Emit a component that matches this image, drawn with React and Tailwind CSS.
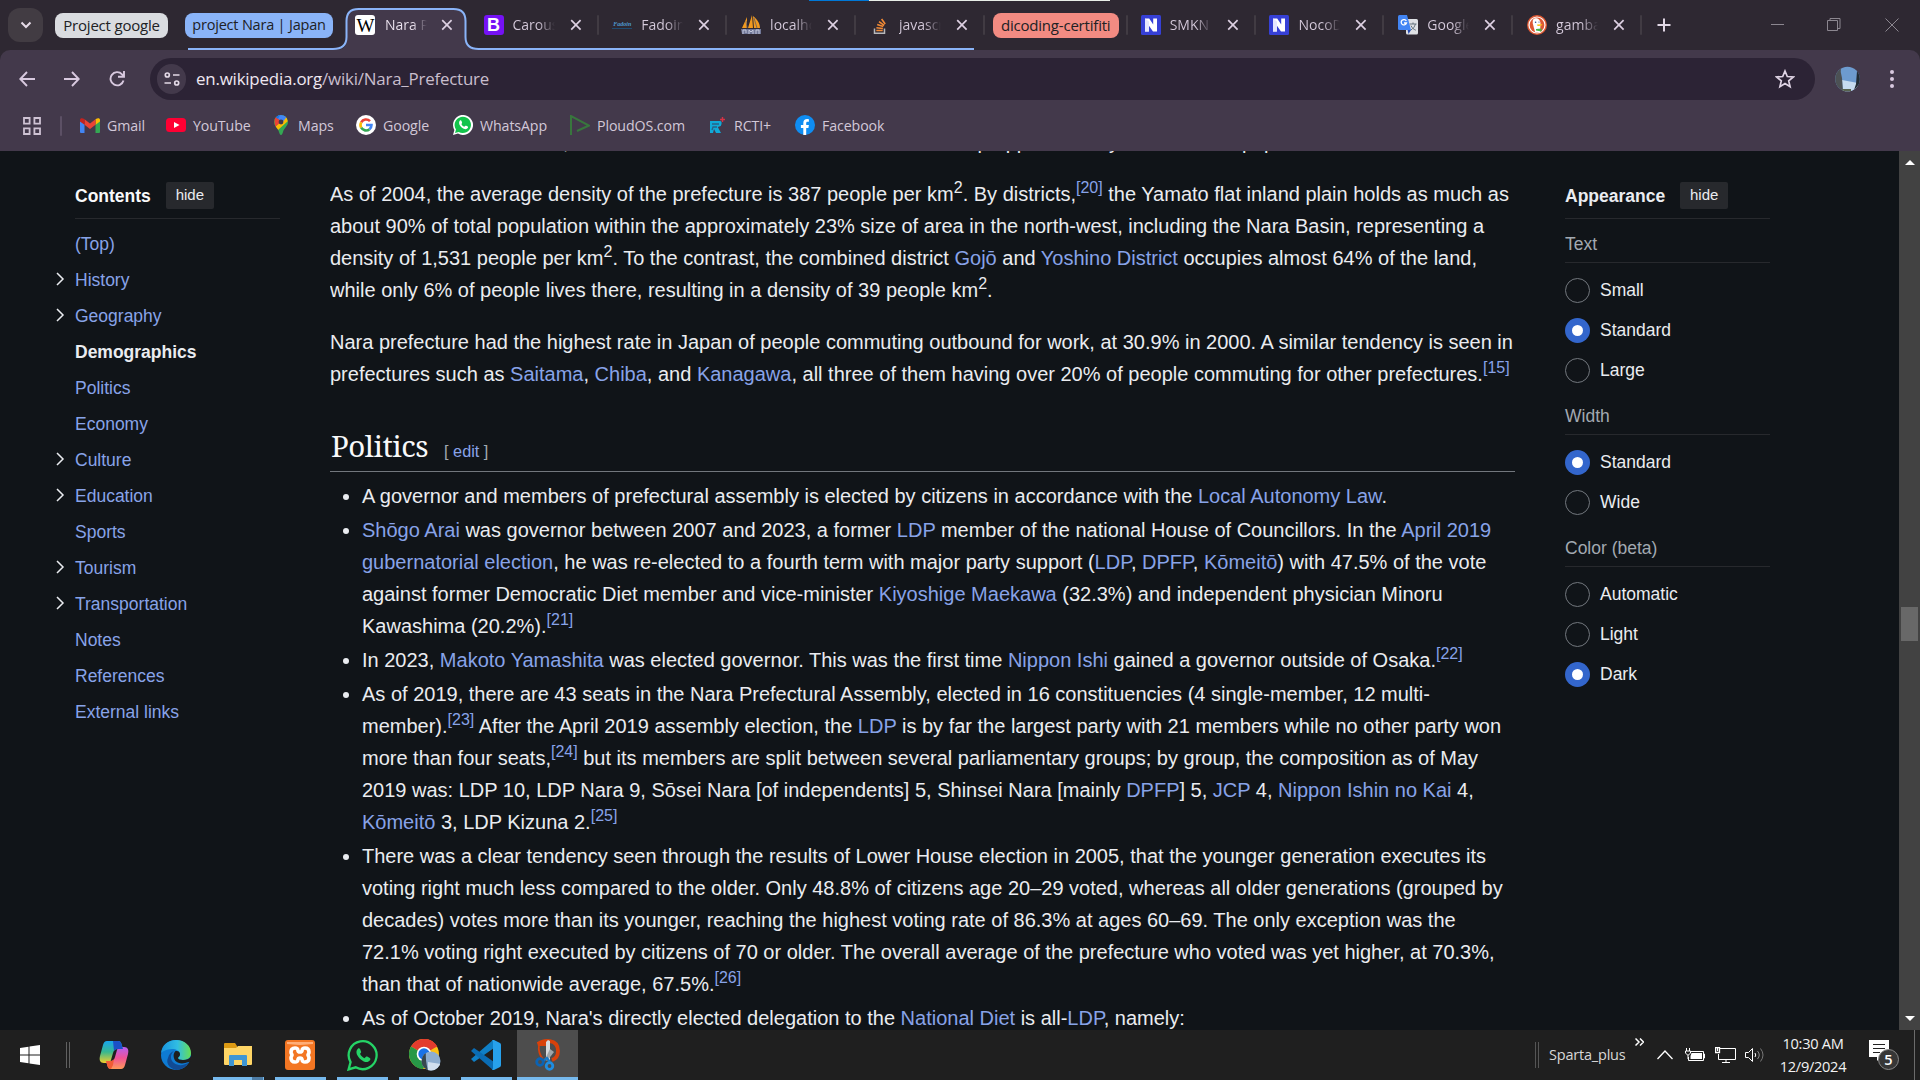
import React from "react";

const LK = ({ children }) => <span className="text-[#88a3e8]">{children}</span>;
const Ref = ({ n }) => (
  <sup className="relative top-[-8px] align-baseline text-[16px] leading-none text-[#88a3e8]">[{n}]</sup>
);
const Sq = () => <sup className="relative top-[-8px] align-baseline text-[16px] leading-none">2</sup>;
const Ln = ({ children }) => <span className="block h-8 whitespace-nowrap leading-8">{children}</span>;
const Li = ({ children }) => (
  <li className="relative mb-[2px]">
    <span className="absolute left-[-19px] top-[14px] size-[6px] rounded-full bg-[#eaecf0]" />
    {children}
  </li>
);

const Close = () => (
  <svg width="12" height="12" viewBox="0 0 12 12" className="shrink-0" stroke="#ddd0e2" strokeWidth="1.7">
    <path d="M1.2 1.2l9.4 9.4M10.6 1.2L1.2 10.6" />
  </svg>
);

const NIcon = () => (
  <svg width="20" height="20" viewBox="0 0 20 20">
    <rect width="20" height="20" rx="1.5" fill="#3640d6" />
    <path d="M4 3.5h4.2l4 6V3.5H16v13h-4l-4.2-6v6H4z" fill="#fff" />
    <path d="M4 3.5l4 3v10H4z" fill="#e5e6ff" />
  </svg>
);

const TAB_ICONS = {
  boot: (
    <span className="flex size-5 items-center justify-center rounded-[3px] bg-[#7512f5] font-['Liberation_Sans'] text-[18px] font-bold leading-none text-white">B</span>
  ),
  fado: (
    <span className="w-5 border-b border-[#1f4a70] text-center font-['Liberation_Serif'] text-[6px] font-bold italic leading-[7px] text-[#4e9ad0]">Fadoin</span>
  ),
  pma: (
    <svg width="20" height="20" viewBox="0 0 20 20">
      <path d="M6 2L1 13h5zM11 0L7 13h5zM12 1c5 4 7 8 7 12h-6z" fill="#f29a1f" />
      <path d="M5 6l1 7M13 3l3 10" stroke="#7d6a58" />
      <path d="M0 14h20v5H1z" fill="#707797" />
      <path d="M2 19v-4h3v3M8 19v-4l2 2 2-2v4M15 19v-4h3v4" stroke="#c4c9dc" fill="none" />
    </svg>
  ),
  so: (
    <svg width="20" height="20" viewBox="0 0 20 20" fill="none">
      <path d="M4.500 13.500v4.700h10v-4.700" stroke="#b8b8ba" strokeWidth="1.500" />
      <path d="M6.300 15.500h6.400M6.400 12.700l6.500.8M7.200 9.600l6.100 2M9 6.600l5.200 3.700M11.600 4l3.600 5" stroke="#f28a35" strokeWidth="1.600" />
    </svg>
  ),
  n: <NIcon />,
  tr: (
    <svg width="20" height="20" viewBox="0 0 20 20">
      <rect x="8" y="4" width="12" height="15.5" rx="1.5" fill="#dfe1e5" />
      <path d="M11.5 9h7M15 7.5V9M17.4 9c-.8 3-2.4 4.8-4.6 6M13 10.600c1 2.300 2.600 3.700 4.800 4.600" stroke="#64727c" fill="none" />
      <path d="M0 1.500Q0 0 1.500 0H9l4 15H1.500Q0 15 0 13.500z" fill="#4285f4" />
      <path d="M9.600 15H13l-2.500 4z" fill="#2448b0" />
      <path d="M8.300 6A2.700 2.700 0 1 0 8.500 8H6" stroke="#fff" strokeWidth="1.300" fill="none" />
    </svg>
  ),
  duck: (
    <svg width="20" height="20" viewBox="0 0 20 20">
      <circle cx="10" cy="10" r="10" fill="#de5833" />
      <circle cx="10" cy="10" r="8.600" fill="#fff" />
      <circle cx="10" cy="10" r="7.400" fill="#de5833" />
      <path d="M7 3.700c4-1.500 6.500 1.600 6.500 5.300l-.5 7.900c-1.600.6-3.300.6-5 0L5.800 8.500C5.500 6.500 5.600 4.500 7 3.700z" fill="#fff" />
      <path d="M10 9.500l5-.3c1 .8 0 1.500-4.500 1.800z" fill="#fcc419" />
      <path d="M9 14l5.500-.6v3L9 15.500z" fill="#43b649" />
      <circle cx="8.600" cy="7.200" r=".8" fill="#2d4f8e" />
      <circle cx="12" cy="7" r=".6" fill="#2d4f8e" />
    </svg>
  ),
};

function Tab({ icon, label, sep = true }) {
  return (
    <div className="flex h-10 w-[128.800px] shrink-0 items-center">
      <div className="flex w-[113px] items-center">
        <span className="flex w-5 shrink-0 justify-center">{TAB_ICONS[icon]}</span>
        <span className="ml-[9px] w-[42px] shrink-0 overflow-hidden whitespace-nowrap bg-gradient-to-r from-[#d6cbdc] from-60% to-[#d6cbdc00] bg-clip-text text-[14px] leading-5 text-transparent">
          {label}
        </span>
        <span className="ml-[15px] flex"><Close /></span>
      </div>
      {sep && <span className="h-5 w-[2px] rounded-full bg-[#413b43]" />}
    </div>
  );
}

function TabStrip() {
  return (
    <div className="relative flex h-[50px] w-full bg-[#2e2832]">
      <div className="absolute left-[809px] top-0 flex h-px w-[301px]">
        <span className="w-[60px] bg-[#0078d7]" />
        <span className="flex-1 bg-[#e8eee8]" />
      </div>
      <svg className="absolute left-[188px] top-0" width="787" height="50" viewBox="0 0 787 50" fill="none">
        <path d="M147 50c9 0 12-4 12-12V21q0-12 12-12h95q12 0 12 12v17c0 8 4 12 13 12z" fill="#43394b" />
        <path d="M0 49h145c9 0 13.500-4 13.500-12V21q0-12 12-12h95q12 0 12 12v16c0 8 4 12 13 12H786" stroke="#8ab4f8" strokeWidth="2" />
      </svg>
      <div className="relative flex h-[50px] flex-1 items-center">
        <span className="ml-2 flex h-[34px] w-[35px] items-center justify-center rounded-[12px] bg-[#423c43]">
          <svg width="12" height="8" viewBox="0 0 12 8" fill="none" stroke="#e6dbe8" strokeWidth="2"><path d="M1.500 1.500L6 6l4.500-4.500" /></svg>
        </span>
        <span className="ml-3 flex h-[25px] w-[113px] items-center justify-center whitespace-nowrap rounded-[8px] bg-[#dadce0] text-[15px] tracking-[-0.200px] text-[#202124]">Project google</span>
        <span className="ml-[17px] flex h-[25px] w-[148px] items-center justify-center whitespace-nowrap rounded-[8px] bg-[#8ab4f8] text-[14.500px] tracking-[-0.200px] text-[#202124]">project Nara | Japan</span>
        <div className="ml-[22px] flex w-[128.500px] items-center">
          <span className="flex h-5 w-5 items-center justify-center rounded-[3px] bg-white font-['Liberation_Serif'] text-[19px] leading-none tracking-[-1px] text-black">W</span>
          <span className="ml-[10px] w-[42px] overflow-hidden whitespace-nowrap bg-gradient-to-r from-[#efe6f2] from-65% to-[#efe6f200] bg-clip-text text-[14px] leading-5 text-transparent">Nara Pref</span>
          <span className="ml-[14px] flex"><Close /></span>
        </div>
        <Tab icon="boot" label="Carousel" />
        <Tab icon="fado" label="Fadoin" />
        <Tab icon="pma" label="localhost" />
        <Tab icon="so" label="javascript" />
        <span className="-ml-[6px] flex h-[25px] w-[126px] items-center justify-center whitespace-nowrap rounded-[8px] bg-[#f28b82] text-[15px] tracking-[-0.200px] text-[#202124]">dicoding-certifiti</span>
        <span className="ml-[7px] mr-[13px] h-5 w-[2px] rounded-full bg-[#413b43]" />
        <Tab icon="n" label="SMKN 1" />
        <Tab icon="n" label="NocoDB" />
        <Tab icon="tr" label="Google" />
        <Tab icon="duck" label="gambar" />
        <svg className="ml-px" width="14" height="14" viewBox="0 0 14 14" stroke="#e2d8e6" strokeWidth="2"><path d="M7 .5v13M.5 7h13" /></svg>
        <div className="ml-auto mr-[21px] flex items-center text-[#8c8790]">
          <svg width="13" height="14" viewBox="0 0 13 14" stroke="currentColor"><path d="M0 6.500h13" /></svg>
          <svg className="ml-[43px]" width="14" height="14" viewBox="0 0 14 14" fill="none" stroke="currentColor"><path d="M.5 2.500h10v10h-10zM3 2.500V.500h10v10h-2.500" /></svg>
          <svg className="ml-[44px]" width="14" height="14" viewBox="0 0 14 14" stroke="currentColor"><path d="M.5.5l13 13M13.500.5l-13 13" /></svg>
        </div>
      </div>
    </div>
  );
}

function AddressBar() {
  return (
    <div className="flex h-[57px] w-full items-center rounded-t-[10px] bg-[#43394b]">
      <div className="flex w-[150px] items-center gap-[29px] pl-[19px]">
        <svg width="16" height="16" viewBox="0 0 16 16" fill="none" stroke="#d8c9df" strokeWidth="1.900"><path d="M16 8H1.500M8 1L1.300 8 8 15" /></svg>
        <svg width="16" height="16" viewBox="0 0 16 16" fill="none" stroke="#d8c9df" strokeWidth="1.900"><path d="M0 8h14.500M8 1l6.700 7L8 15" /></svg>
        <svg width="16" height="16" viewBox="0 0 16 16" fill="none" stroke="#d8c9df" strokeWidth="1.900"><path d="M14.500 9.500A6.600 6.600 0 1 1 13 3.300L14.500 5M15 0v5.800H9" /></svg>
      </div>
      <div className="flex h-[42px] w-[1665px] items-center rounded-full bg-[#2c2335]">
        <span className="ml-[7px] flex h-[30px] w-[29px] items-center justify-center rounded-full bg-[#43394b]">
          <svg width="16" height="14" viewBox="0 0 16 14" fill="none" stroke="#e3d9e6" strokeWidth="1.700"><circle cx="3.300" cy="3" r="2" /><path d="M9 3h6.500M.5 11H7" /><circle cx="12.700" cy="11" r="2" /></svg>
        </span>
        <span className="ml-[10px] mt-px whitespace-nowrap text-[16.900px] tracking-[-0.200px] text-[#efe7f1]">en.wikipedia.org<span className="text-[#c9becd]">/wiki/Nara_Prefecture</span></span>
        <svg className="ml-auto mr-[20px]" width="20" height="20" viewBox="0 0 20 20" fill="none" stroke="#e0d4e5" strokeWidth="1.700"><path d="M10 2l2.300 5.500 6 .5-4.600 3.900 1.400 5.800L10 14.600l-5.100 3.100 1.400-5.800L1.700 8l6-.5z" /></svg>
      </div>
      <svg className="ml-[20px] shrink-0" width="25" height="26" viewBox="0 0 25 26">
        <clipPath id="av"><circle cx="12.500" cy="13" r="12.300" /></clipPath>
        <g clipPath="url(#av)">
          <path d="M0 0h25v26H0z" fill="#6d9bcf" />
          <path d="M7 14l16 3v9H8z" fill="#c6dcf0" />
          <path d="M0 0h6q-1 6 1 12l1 14H0z" fill="#4c5154" />
          <path d="M22 5l3 1v14l-6 4 2-6z" fill="#222b33" />
          <path d="M7 23h9v3H7z" fill="#58634f" />
        </g>
      </svg>
      <svg className="ml-[29px] shrink-0" width="6" height="20" viewBox="0 0 6 20" fill="#d8c9df"><circle cx="3" cy="3" r="2" /><circle cx="3" cy="10" r="2" /><circle cx="3" cy="17" r="2" /></svg>
    </div>
  );
}

const Bm = ({ size, label, children }) => (
  <div className={"flex shrink-0 items-center whitespace-nowrap text-[14.200px] tracking-[-0.100px] text-[#d2c8d8] " + size}>
    <span className="mr-[7px] flex w-5 justify-center">{children}</span>
    {label}
  </div>
);

const WaPath = () => (
  <path d="M7 5.600c.5-.5 1.200-.3 1.500.4l.6 1.600c.1.500-.2.900-.7 1.300.6 1.300 1.500 2.200 2.800 2.800l.9-.8c.4-.4.8-.3 1.200-.1l1.400.8c.5.300.5.900.1 1.500-.9 1.300-2.400 1.400-4 .7-2-.9-3.600-2.500-4.400-4.400C5.900 7.900 6 6.500 7 5.600z" />
);

function Bookmarks() {
  return (
    <div className="flex h-[44px] w-full items-start bg-[#43394b]">
      <div className="flex h-[37px] items-center">
        <svg className="ml-[23px] shrink-0" width="18" height="18" viewBox="0 0 18 18" fill="none" stroke="#cfc3d4" strokeWidth="1.800"><path d="M1 1h5.600v5.600H1zM11.400 1H17v5.600h-5.600zM1 11.400h5.600V17H1zM11.400 11.400H17V17h-5.600z" /></svg>
        <span className="ml-[19px] mr-[18px] h-5 w-[2px] shrink-0 rounded-full bg-[#5c5065]" />
        <Bm size="w-[86px]" label="Gmail">
          <svg width="20" height="15" viewBox="0 0 20 15"><path d="M0 3v11q0 1 1 1h3.500V6z" fill="#4285f4" /><path d="M20 3v11q0 1-1 1h-3.500V6z" fill="#34a853" /><path d="M15.500 1.300v5.500L20 3.400V2c0-2-2.200-2.500-4.500-.7z" fill="#fbbc04" /><path d="M4.500 6.800V1.300L10 5.500l5.500-4.200v5.500L10 11z" fill="#ea4335" /><path d="M0 2v1.400l4.500 3.400V1.300C2.500-.4 0 0 0 2z" fill="#c5221f" /></svg>
        </Bm>
        <Bm size="w-[105px]" label="YouTube">
          <svg width="20" height="14" viewBox="0 0 20 14"><rect width="20" height="14" rx="3.500" fill="#ff0033" /><path d="M8 4l5.500 3L8 10z" fill="#fff" /></svg>
        </Bm>
        <Bm size="w-[85px]" label="Maps">
          <svg width="14" height="20" viewBox="0 0 14 20"><clipPath id="pin"><path d="M7 0a7 7 0 0 1 7 7c0 4-4 6-5 10-.4 1.500-1 3-2 3s-1.600-1.500-2-3C4 13 0 11 0 7a7 7 0 0 1 7-7z" /></clipPath><g clipPath="url(#pin)"><path d="M0 0h14v20H0z" fill="#34a853" /><path d="M0 13L12 1l2 5L4 15z" fill="#fbbc04" /><path d="M4 0h10L8 8 3 3z" fill="#4285f4" /><path d="M0 2l2-1 5 6-6 5z" fill="#ea4335" /><path d="M2 0h4L4 4 1.500 2z" fill="#1a73e8" /></g><circle cx="7" cy="7" r="2.400" fill="#43394b" /></svg>
        </Bm>
        <Bm size="w-[97px]" label="Google">
          <svg width="20" height="20" viewBox="0 0 20 20" fill="none" strokeWidth="2.600"><circle cx="10" cy="10" r="10" fill="#fff" /><path d="M14 6.200A5.500 5.500 0 0 0 5.200 7.300" stroke="#ea4335" /><path d="M5.200 7.300a5.500 5.500 0 0 0 0 5.400" stroke="#fbbc05" /><path d="M5.200 12.700a5.500 5.500 0 0 0 8.300 1.500" stroke="#34a853" /><path d="M13.500 14.200a5.500 5.500 0 0 0 2-4.200H10" stroke="#4285f4" /></svg>
        </Bm>
        <Bm size="w-[117px]" label="WhatsApp">
          <svg width="20" height="20" viewBox="0 0 20 20"><path d="M0 20l1.400-5A10 10 0 1 1 5 18.600z" fill="#fff" /><path d="M2 18l1-3.500A8.200 8.200 0 1 1 5.700 17z" fill="#12c44b" /><g fill="#fff"><WaPath /></g></svg>
        </Bm>
        <Bm size="w-[137px]" label="PloudOS.com">
          <svg width="20" height="20" viewBox="0 0 20 20" fill="none" stroke="#38763d" strokeWidth="2"><path d="M1 20V1l18 9.500L7 16" /></svg>
        </Bm>
        <Bm size="w-[88px]" label="RCTI+">
          <svg width="18" height="18" viewBox="0 0 18 18"><path d="M2 5h10q2 0 1.500 3l-.7 2-3 1L13 17H8l-2-4-1 4H2z" fill="#10a9d8" /><path d="M4 8h7M4 14l1-3h4" stroke="#286187" strokeWidth="1.300" fill="none" /><path d="M14.500 1v5M12 3.500h5" stroke="#d63345" strokeWidth="1.400" /></svg>
        </Bm>
        <Bm size="w-[100px]" label="Facebook">
          <svg width="20" height="20" viewBox="0 0 20 20"><circle cx="10" cy="10" r="10" fill="#0f8df2" /><path d="M8.300 20v-7H5.900v-2.900h2.400V8.200c0-2.800 1.500-4.100 3.900-4.100l1.700.2v2.500h-1.300c-1.200 0-1.400.7-1.400 1.500v1.800h2.700l-.5 2.900h-2.200v7z" fill="#fff" /></svg>
        </Bm>
      </div>
    </div>
  );
}

const TOC = [
  ["(Top)"], ["History", 1], ["Geography", 1], ["Demographics", 0, 1], ["Politics"], ["Economy"], ["Culture", 1],
  ["Education", 1], ["Sports"], ["Tourism", 1], ["Transportation", 1], ["Notes"], ["References"], ["External links"],
];

function Contents() {
  return (
    <nav className="w-[330px] shrink-0 pl-[50px] pt-[31px] text-[17.500px]">
      <div className="ml-[25px] flex h-[37px] w-[205px] items-start border-b border-[#27292d]">
        <span className="mt-[1px] font-bold leading-[26px] text-[#f8f9fa]">Contents</span>
        <span className="ml-[15px] flex h-[27px] w-[48px] items-center justify-center rounded-[2px] bg-[#27292d] text-[15px] text-[#eaecf0]">hide</span>
      </div>
      <ul className="mt-[7px]">
        {TOC.map(([t, c, b]) => (
          <li key={t} className="flex h-9 items-center">
            <span className="mb-[3px] flex w-[25px] items-center pl-[6px]">
              {c ? <svg width="9" height="14" viewBox="0 0 9 14" fill="none" stroke="#eaecf0" strokeWidth="1.500"><path d="M1 1l6 6-6 6" /></svg> : null}
            </span>
            <span className={b ? "font-bold text-[#eaecf0]" : "text-[#88a3e8]"}>{t}</span>
          </li>
        ))}
      </ul>
    </nav>
  );
}

function Article() {
  return (
    <main className="relative w-[1185px] shrink-0 overflow-hidden text-[20px] text-[#eaecf0]">
      <div className="absolute -top-[25px] left-0 whitespace-nowrap leading-8">
        <span className="ml-[233px]">,</span><span className="ml-[409px]">p</span><span className="ml-[17px]">pp</span><span className="ml-[81px]">y</span><span className="ml-[123px]">p</span><span className="ml-[11px]">p</span>
      </div>
      <p className="mt-[27px]">
        <Ln>As of 2004, the average density of the prefecture is 387 people per km<Sq />. By districts,<Ref n="20" /> the Yamato flat inland plain holds as much as</Ln>
        <Ln>about 90% of total population within the approximately 23% size of area in the north-west, including the Nara Basin, representing a</Ln>
        <Ln>density of 1,531 people per km<Sq />. To the contrast, the combined district <LK>Gojō</LK> and <LK>Yoshino District</LK> occupies almost 64% of the land,</Ln>
        <Ln>while only 6% of people lives there, resulting in a density of 39 people km<Sq />.</Ln>
      </p>
      <p className="mt-5">
        <Ln>Nara prefecture had the highest rate in Japan of people commuting outbound for work, at 30.9% in 2000. A similar tendency is seen in</Ln>
        <Ln>prefectures such as <LK>Saitama</LK>, <LK>Chiba</LK>, and <LK>Kanagawa</LK>, all three of them having over 20% of people commuting for other prefectures.<Ref n="15" /></Ln>
      </p>
      <h2 className="mt-[33px] flex h-[49px] items-baseline border-b border-[#72777d]">
        <span className="ml-px font-['Noto_Serif','Liberation_Serif',serif] text-[29.500px] leading-[45px] tracking-[-0.500px] text-[#f8f9fa]">Politics</span>
        <span className="ml-[16px] text-[16.250px] text-[#a2a9b1]">[ <LK>edit</LK> ]</span>
      </h2>
      <ul className="ml-8 mt-2">
        <Li><Ln>A governor and members of prefectural assembly is elected by citizens in accordance with the <LK>Local Autonomy Law</LK>.</Ln></Li>
        <Li>
          <Ln><LK>Shōgo Arai</LK> was governor between 2007 and 2023, a former <LK>LDP</LK> member of the national House of Councillors. In the <LK>April 2019</LK></Ln>
          <Ln><LK>gubernatorial election</LK>, he was re-elected to a fourth term with major party support (<LK>LDP</LK>, <LK>DPFP</LK>, <LK>Kōmeitō</LK>) with 47.5% of the vote</Ln>
          <Ln>against former Democratic Diet member and vice-minister <LK>Kiyoshige Maekawa</LK> (32.3%) and independent physician Minoru</Ln>
          <Ln>Kawashima (20.2%).<Ref n="21" /></Ln>
        </Li>
        <Li><Ln>In 2023, <LK>Makoto Yamashita</LK> was elected governor. This was the first time <LK>Nippon Ishi</LK> gained a governor outside of Osaka.<Ref n="22" /></Ln></Li>
        <Li>
          <Ln>As of 2019, there are 43 seats in the Nara Prefectural Assembly, elected in 16 constituencies (4 single-member, 12 multi-</Ln>
          <Ln>member).<Ref n="23" /> After the April 2019 assembly election, the <LK>LDP</LK> is by far the largest party with 21 members while no other party won</Ln>
          <Ln>more than four seats,<Ref n="24" /> but its members are split between several parliamentary groups; by group, the composition as of May</Ln>
          <Ln>2019 was: LDP 10, LDP Nara 9, Sōsei Nara [of independents] 5, Shinsei Nara [mainly <LK>DPFP</LK>] 5, <LK>JCP</LK> 4, <LK>Nippon Ishin no Kai</LK> 4,</Ln>
          <Ln><LK>Kōmeitō</LK> 3, LDP Kizuna 2.<Ref n="25" /></Ln>
        </Li>
        <Li>
          <Ln>There was a clear tendency seen through the results of Lower House election in 2005, that the younger generation executes its</Ln>
          <Ln>voting right much less compared to the older. Only 48.8% of citizens age 20–29 voted, whereas all older generations (grouped by</Ln>
          <Ln>decades) votes more than its younger, reaching the highest voting rate of 86.3% at ages 60–69. The only exception was the</Ln>
          <Ln>72.1% voting right executed by citizens of 70 or older. The overall average of the prefecture who voted was yet higher, at 70.3%,</Ln>
          <Ln>than that of nationwide average, 67.5%.<Ref n="26" /></Ln>
        </Li>
        <Li><Ln>As of October 2019, Nara's directly elected delegation to the <LK>National Diet</LK> is all-<LK>LDP</LK>, namely:</Ln></Li>
      </ul>
    </main>
  );
}

const Radio = ({ on, children }) => (
  <div className="flex h-10 items-center">
    <span className={on ? "flex size-[25px] items-center justify-center rounded-full bg-[#3366cc]" : "size-[25px] rounded-full border border-[#72777d]"}>
      {on ? <span className="size-[11px] rounded-full bg-white" /> : null}
    </span>
    <span className="ml-[10px] text-[17.500px] text-[#eaecf0]">{children}</span>
  </div>
);
const Head = ({ children }) => (
  <div className="h-[31px] border-b border-[#27292d] text-[17.500px] leading-[24px] text-[#a2a9b1]">{children}</div>
);

function Appearance() {
  return (
    <aside className="ml-[50px] w-[205px] shrink-0 pt-[31px]">
      <div className="flex h-[37px] items-start border-b border-[#27292d]">
        <span className="mt-[1px] text-[17.500px] font-bold leading-[26px] text-[#eaecf0]">Appearance</span>
        <span className="ml-[15px] flex h-[27px] w-[48px] items-center justify-center rounded-[2px] bg-[#27292d] text-[15px] text-[#eaecf0]">hide</span>
      </div>
      <div className="mt-[13px]"><Head>Text</Head></div>
      <div className="mt-[7px]"><Radio>Small</Radio><Radio on>Standard</Radio><Radio>Large</Radio></div>
      <div className="mt-[14px]"><Head>Width</Head></div>
      <div className="mt-[7px]"><Radio on>Standard</Radio><Radio>Wide</Radio></div>
      <div className="mt-[14px]"><Head>Color (beta)</Head></div>
      <div className="mt-[7px]"><Radio>Automatic</Radio><Radio>Light</Radio><Radio on>Dark</Radio></div>
    </aside>
  );
}

function Scrollbar() {
  return (
    <div className="ml-auto flex w-[21px] flex-col items-center bg-[#424242]">
      <svg className="mt-[9px]" width="10" height="5" viewBox="0 0 10 5" fill="#fff"><path d="M5 0l5 5H0z" /></svg>
      <span className="mt-[442px] h-[34px] w-[17px] bg-[#686868]" />
      <svg className="mb-[9px] mt-auto" width="10" height="5" viewBox="0 0 10 5" fill="#fff"><path d="M0 0h10L5 5z" /></svg>
    </div>
  );
}

const Slot = ({ active, run = true, children }) => (
  <div className={"relative flex h-[50px] shrink-0 items-center justify-center " + (active ? "w-[61px] bg-[#4d4d4d]" : "w-[62px]")}>
    {children}
    {run && <span className={"absolute bottom-0 h-[3px] bg-[#76b9ed] " + (active ? "w-full" : "w-[51px]")} />}
  </div>
);

function Taskbar() {
  return (
    <footer className="flex h-[50px] w-full items-center bg-[#1f1f1f] text-[#f2f2f2]">
      <svg className="ml-[20px]" width="20" height="20" viewBox="0 0 20 20" fill="#fff"><path d="M0 3l8.500-1.200v7.700H0zM9.500 1.600L20 0v9.500H9.500zM0 10.500h8.500v7.700L0 17zM9.500 10.500H20V20L9.500 18.400z" /></svg>
      <span className="ml-[26px] h-[26px] w-1 border-x border-[#606060]" />
      <div className="ml-[13px] flex">
        <Slot run={false}>
          <svg width="30" height="28" viewBox="0 0 30 28">
            <defs>
              <linearGradient id="c1" x1="0" y1="0" x2="0" y2="1"><stop stopColor="#18a5ef" /><stop offset=".5" stopColor="#38b88f" /><stop offset="1" stopColor="#f2d02b" /></linearGradient>
              <linearGradient id="c2" x1="0" y1="0" x2="0" y2="1"><stop stopColor="#b45ff2" /><stop offset=".5" stopColor="#f05296" /><stop offset="1" stopColor="#ff9a58" /></linearGradient>
            </defs>
            <path d="M8 0h11c2 0 3 1 3.500 3L24 8h-5c-3 0-4 1-5 4l-2 7c-.6 2-2 3-4 3H5c-4 0-5-3-4-7L4 4c.7-2.500 2-4 4-4z" fill="url(#c1)" />
            <path d="M22 28H12c-2 0-3-1-3.500-3L7 20h4c3 0 4-1 5-4l2-7c.6-2 2-3 4-3h3c4 0 5 3 4 7l-3 11c-.7 2.500-2 4-4 4z" fill="url(#c2)" />
            <path d="M14 0h5c2 0 3 1 3.500 3L24 8h-5c-2 0-3 .5-4 2z" fill="#1b51c7" />
            <path d="M12 28c-2 0-3-1-3.500-3L7 20h4c2 0 3-.5 4-2l-1 6z" fill="#f15c35" />
          </svg>
        </Slot>
        <Slot run={false}>
          <svg width="30" height="30" viewBox="0 0 30 30">
            <defs><linearGradient id="e1"><stop stopColor="#1893de" /><stop offset=".55" stopColor="#31bde3" /><stop offset="1" stopColor="#67df52" /></linearGradient></defs>
            <circle cx="15" cy="15" r="15" fill="#0e7bd3" />
            <path d="M0 13C1 5 7 0 15 0c9 0 15 6 15 13 0 5-4 7-8 7-3 0-5-1-5-2 0-1 2-1 2-4 0-3-4-5-8-5-6 0-10 3-11 4z" fill="url(#e1)" />
            <path d="M13 11c-3 2-5 8 0 12 4 3 10 3 15-1-3 5-8 8-13 8-8-2-10-8-8-12 1-4 3-6 6-7z" fill="#114b94" />
            <path d="M19 14c0 3-2 3-2 4 0 1 2 2 5 2 4 0 7-1.500 8-4 .5 3 0 6-2.500 6-5 2-10 2-13-1-3-4-2-8 0-10 3-.5 4.500 1 4.500 3z" fill="#1f1f1f" />
          </svg>
        </Slot>
        <Slot>
          <svg width="28" height="24" viewBox="0 0 28 24"><path d="M0 1q0-1 1-1h10l2 3v4H0z" fill="#dc9a13" /><path d="M0 5h12l2-2h14v18q0 1-1 1H1q-1 0-1-1z" fill="#fed566" /><path d="M5 13q0-1 1-1h16q1 0 1 1v10h-5v-6h-8v6H5z" fill="#3f96d4" /></svg>
          <span className="absolute bottom-0 right-[6px] z-10 h-[3px] w-[11px] bg-[#4d7ca5]" />
        </Slot>
        <Slot>
          <svg width="30" height="30" viewBox="0 0 30 30"><rect width="30" height="30" rx="3" fill="#f37623" /><path d="M2 2h26v2L15 5 2 4z" fill="#ffae78" /><path d="M10 8c5 0 1 4 5 4s0-4 5-4c3 0 4 2 4 4s-1 2-1 3 1 1 1 3-1 4-4 4c-5 0-1-4-5-4s0 4-5 4c-3 0-4-2-4-4s1-2 1-3-1-1-1-3 1-4 4-4z" fill="none" stroke="#fff" strokeWidth="3.600" /></svg>
        </Slot>
        <Slot>
          <svg className="shrink-0" width="31" height="31" viewBox="0 0 20 20"><path d="M1 19l1.300-4.700A9 9 0 1 1 5.600 17.600z" fill="none" stroke="#25d366" strokeWidth="1.500" /><g fill="#25d366"><WaPath /></g></svg>
        </Slot>
        <Slot>
          <svg className="ml-[2px]" width="32" height="32" viewBox="0 0 32 32"><circle cx="15" cy="15" r="15" fill="#fbc116" /><path d="M15 15L2 7.500a15 15 0 0 1 26 0z" fill="#e33b2e" /><path d="M15 15L2 7.500A15 15 0 0 0 14 30l5-9z" fill="#279847" /><path d="M15 8h13.300q-4-8-13.300-8v8z" fill="#e33b2e" /><circle cx="15" cy="15" r="7.300" fill="#fff" /><circle cx="15" cy="15" r="5.700" fill="#1a73e8" /><clipPath id="avs"><circle cx="22" cy="22" r="9.500" /></clipPath><g clipPath="url(#avs)"><path d="M12 12h20v20H12z" fill="#8eaed0" /><path d="M12 12h5q-1 8 2 20h-7z" fill="#37474f" /><path d="M19 23l13 2v7H19z" fill="#d1dfee" /></g></svg>
        </Slot>
        <Slot>
          <svg width="30" height="30" viewBox="0 0 30 30"><path d="M22 0L0 19l3 3 20-14z" fill="#0f7fc6" /><path d="M22 30L0 11l3-3 20 14z" fill="#0a6cb4" /><path d="M21 0q1-.2 2 0l6 3q1 .5 1 2v20q0 1.500-1 2l-6 3q-1 .2-2 0 1-1 1-2V2q0-1-1-2z" fill="#27a1ec" /></svg>
        </Slot>
        <Slot active>
          <svg width="26" height="32" viewBox="0 0 26 32">
            <path d="M3 5C8 1 23-1 23 12c0 6-3 8-6 9" stroke="#d8410a" strokeWidth="3.800" fill="none" />
            <path d="M2 3h11v4H3z" fill="#d8410a" />
            <path d="M4 7c-1 4 1 10 4 13" stroke="#d8410a" strokeWidth="1.800" fill="none" />
            <path d="M11 3l2-2 2 1v19h-4z" fill="#d7dadd" />
            <path d="M15 10l4 3-7 9-2-2z" fill="#a0a6a9" />
            <path d="M8 22l4-3 3 4" stroke="#1779c8" strokeWidth="2.200" fill="none" />
            <circle cx="5" cy="23" r="3.300" stroke="#0b63b4" strokeWidth="2.800" fill="none" />
            <circle cx="14.500" cy="27" r="3.300" stroke="#1f8de0" strokeWidth="2.800" fill="none" />
          </svg>
        </Slot>
      </div>
      <span className="ml-auto h-[26px] w-1 border-x border-[#555]" />
      <span className="ml-[10px] w-[78px] whitespace-nowrap text-[14.500px] tracking-[-0.200px] text-[#d8d8d8]">Sparta_plus</span>
      <svg className="mb-[26px] ml-[8px]" width="9" height="8" viewBox="0 0 9 8" fill="none" stroke="#fff" strokeWidth="1.500"><path d="M.5.5L4 4 .5 7.500M5 .5L8.500 4 5 7.500" /></svg>
      <svg className="ml-[13px]" width="16" height="10" viewBox="0 0 16 10" fill="none" stroke="#fff" strokeWidth="1.300"><path d="M.5 9L8 1l7.500 8" /></svg>
      <svg className="ml-[12px]" width="20" height="14" viewBox="0 0 20 14" fill="none" stroke="#fff"><path d="M5 3.500h13.500v9h-15V9M18.500 6h1v4h-1" /><path d="M6.500 5h10.500v6H5.500V8z" fill="#fff" stroke="none" /><path d="M1.500 0v3M4.500 0v3M.5 3h5v2L3.500 7h-1l-2-2zM3 7v4" /></svg>
      <svg className="ml-[10px]" width="21" height="17" viewBox="0 0 21 17" fill="none" stroke="#fff"><path d="M5 1.500h15.500v11H3.500V7M7 15.500h8M11 12.500v3" /><path d="M.5.5h4v5h-4zM2.500 1v3" strokeWidth="1.300" /></svg>
      <svg className="ml-[9px]" width="21" height="18" viewBox="0 0 21 18" fill="none" stroke="#fff"><path d="M.5 6.500h3L7.500 2.500v13l-4-4h-3z" /><path d="M10 7q1.500 2 0 4" /><path d="M12.500 5q3.500 4 0 8" stroke="#888" /><path d="M15.500 2.500q5 6.500 0 13" stroke="#777" /></svg>
      <div className="ml-[12px] flex w-[70px] flex-col items-center whitespace-nowrap text-[14.600px] leading-[23px] tracking-[-0.300px]"><span>10:30 AM</span><span>12/9/2024</span></div>
      <svg className="ml-[21px]" width="32" height="32" viewBox="0 0 32 32"><path d="M0 1h20v17H12l-4 4v-4H0z" fill="#fff" /><path d="M4 5.500h12M4 9.500h12M4 13.500h7" stroke="#222" /><circle cx="19.500" cy="20.500" r="10" fill="#373737" stroke="#898989" /><text x="19.500" y="26" textAnchor="middle" fill="#fff" fontSize="14.500" fontWeight="600" fontFamily="Open Sans, sans-serif">5</text></svg>
      <span className="ml-[13px] mr-[5px] h-[50px] w-px bg-[#6b6b6b]" />
    </footer>
  );
}

export default function App() {
  return (
    <div className="flex h-[1080px] w-[1920px] flex-col overflow-hidden bg-[#2e2832] font-['Open_Sans','Noto_Sans',sans-serif]">
      <TabStrip />
      <AddressBar />
      <Bookmarks />
      <div className="flex h-[879px] w-full overflow-hidden bg-[#101418] font-['Liberation_Sans',Arial,sans-serif]">
        <Contents />
        <Article />
        <Appearance />
        <Scrollbar />
      </div>
      <Taskbar />
    </div>
  );
}
